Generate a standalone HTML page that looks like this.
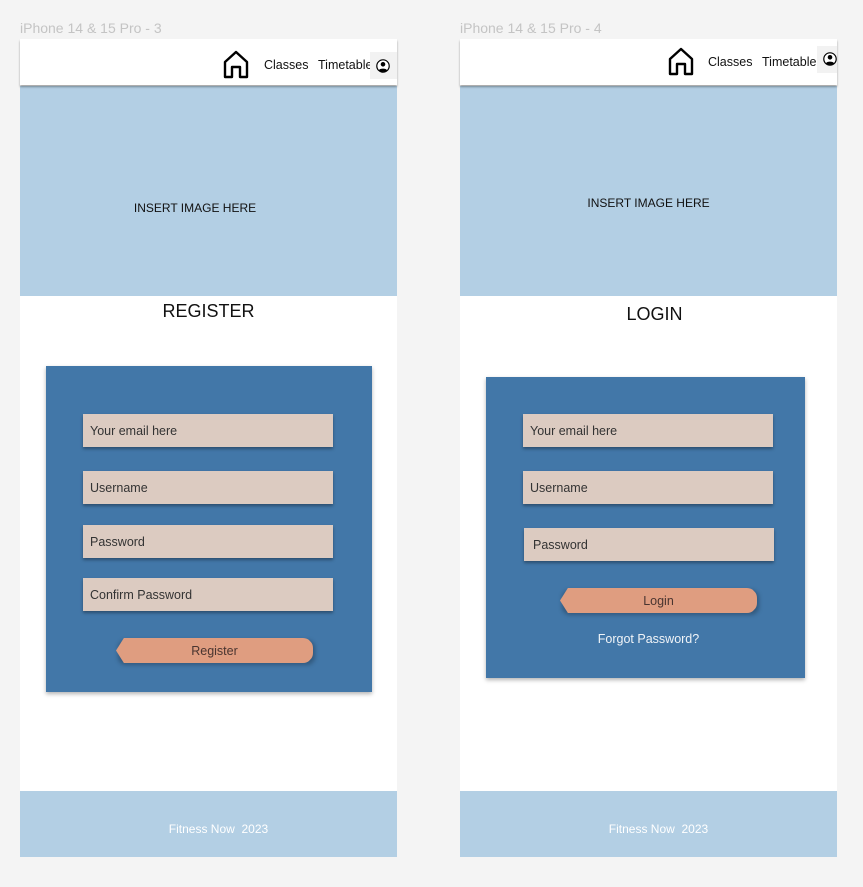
<!DOCTYPE html>
<html><head><meta charset="utf-8">
<style>
*{margin:0;padding:0;box-sizing:border-box}
body{width:863px;height:887px;background:#f4f4f4;position:relative;overflow:hidden;font-family:"Liberation Sans",sans-serif}
.a{position:absolute}
.lbl{color:#c4c4c4;font-size:14px}
.frame{background:#fff}
.hdr{background:#fff;box-shadow:0 2px 2px rgba(0,0,0,.35)}
.img{background:#b3cfe4;display:flex;align-items:center;justify-content:center;font-size:12px;color:#111}
.ft{background:#b3cfe4;color:#fff;font-size:12px;display:flex;align-items:center;justify-content:center}
.box{background:#4277a8;box-shadow:0 2px 4px rgba(0,0,0,.3)}
.in{background:#dccbc1;box-shadow:0 2px 3px rgba(0,0,0,.35);font-size:12.5px;color:#333;padding-left:7px;display:flex;align-items:center}
.btn{background:#df9d80;clip-path:polygon(4% 0,97% 0,100% 25%,100% 75%,97% 100%,4% 100%,0 50%);font-size:12.5px;color:#4a3530;display:flex;align-items:center;justify-content:center;border-radius:0 10px 10px 0}
.nav{font-size:12.5px;color:#111}
.title{font-size:18px;color:#111;text-align:center}
</style></head><body>
<div class="a lbl" style="left:20px;top:20px">iPhone 14 &amp; 15 Pro - 3</div>
<div class="a lbl" style="left:460px;top:20px">iPhone 14 &amp; 15 Pro - 4</div>

<!-- left frame -->
<div class="a frame" style="left:20px;top:39px;width:377px;height:818px"></div>
<div class="a img" style="left:20px;top:86px;width:377px;height:210px"><span style="margin-top:34px;margin-left:-27px">INSERT IMAGE HERE</span></div>
<div class="a hdr" style="left:20px;top:39px;width:377px;height:46px"></div>
<svg class="a" style="left:222px;top:50px" width="28" height="29" viewBox="0 0 28 29"><path d="M3 27V12L14 2L25 12V27H18V17H10V27Z" fill="none" stroke="#000" stroke-width="2.4" stroke-linejoin="round"/></svg>
<div class="a nav" style="left:264px;top:58px">Classes</div>
<div class="a nav" style="left:318px;top:58px">Timetable</div>
<div class="a" style="left:370px;top:52px;width:27px;height:27px;background:#f2f2f2"></div>
<svg class="a" style="left:376px;top:59px" width="14" height="14" viewBox="0 0 14 14"><circle cx="7" cy="7" r="6.2" fill="#fff" stroke="#000" stroke-width="1.2"/><circle cx="7" cy="5.3" r="2.3"/><path d="M2.8 11.3C4 9 10 9 11.2 11.3C9 13.3 5 13.3 2.8 11.3Z"/></svg>
<div class="a title" style="left:20px;top:301px;width:377px">REGISTER</div>
<div class="a box" style="left:46px;top:366px;width:326px;height:326px"></div>
<div class="a in" style="left:83px;top:414px;width:250px;height:33px">Your email here</div>
<div class="a in" style="left:83px;top:471px;width:250px;height:33px">Username</div>
<div class="a in" style="left:83px;top:525px;width:250px;height:33px">Password</div>
<div class="a in" style="left:83px;top:578px;width:250px;height:33px">Confirm Password</div>
<div class="a" style="left:118px;top:640px;width:197px;height:25px;background:rgba(0,0,0,.25);filter:blur(2px);border-radius:8px"></div>
<div class="a btn" style="left:116px;top:638px;width:197px;height:25px">Register</div>
<div class="a ft" style="left:20px;top:791px;width:377px;height:66px"><span style="margin-top:9px;margin-left:20px">Fitness Now&nbsp; 2023</span></div>

<!-- right frame -->
<div class="a frame" style="left:460px;top:39px;width:377px;height:818px"></div>
<div class="a img" style="left:460px;top:86px;width:377px;height:210px"><span style="margin-top:24px">INSERT IMAGE HERE</span></div>
<div class="a hdr" style="left:460px;top:39px;width:377px;height:46px"></div>
<svg class="a" style="left:667px;top:47px" width="28" height="29" viewBox="0 0 28 29"><path d="M3 27V12L14 2L25 12V27H18V17H10V27Z" fill="none" stroke="#000" stroke-width="2.4" stroke-linejoin="round"/></svg>
<div class="a nav" style="left:708px;top:55px">Classes</div>
<div class="a nav" style="left:762px;top:55px">Timetable</div>
<div class="a" style="left:817px;top:46px;width:20px;height:27px;background:#f2f2f2"></div>
<svg class="a" style="left:823px;top:52px" width="14" height="14" viewBox="0 0 14 14"><circle cx="7" cy="7" r="6.2" fill="#fff" stroke="#000" stroke-width="1.2"/><circle cx="7" cy="5.3" r="2.3"/><path d="M2.8 11.3C4 9 10 9 11.2 11.3C9 13.3 5 13.3 2.8 11.3Z"/></svg>
<div class="a title" style="left:466px;top:304px;width:377px">LOGIN</div>
<div class="a box" style="left:486px;top:377px;width:319px;height:301px"></div>
<div class="a in" style="left:523px;top:414px;width:250px;height:33px">Your email here</div>
<div class="a in" style="left:523px;top:471px;width:250px;height:33px">Username</div>
<div class="a in" style="left:524px;top:528px;width:250px;height:33px;padding-left:9px">Password</div>
<div class="a" style="left:562px;top:590px;width:197px;height:25px;background:rgba(0,0,0,.25);filter:blur(2px);border-radius:8px"></div>
<div class="a btn" style="left:560px;top:588px;width:197px;height:25px">Login</div>
<div class="a" style="left:486px;top:632px;width:325px;text-align:center;color:#f0f4f8;font-size:12.5px">Forgot Password?</div>
<div class="a ft" style="left:460px;top:791px;width:377px;height:66px"><span style="margin-top:9px;margin-left:20px">Fitness Now&nbsp; 2023</span></div>
</body></html>
